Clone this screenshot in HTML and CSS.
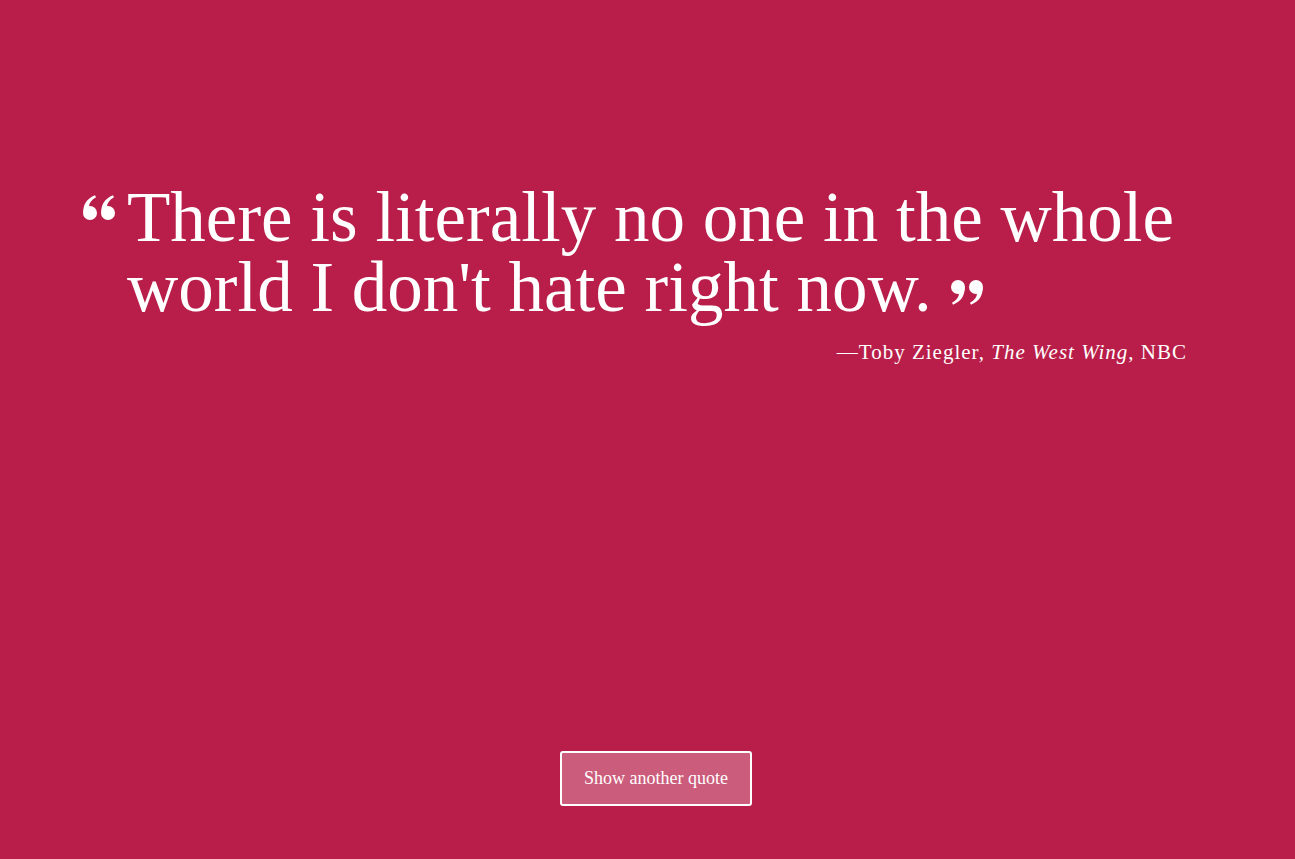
FILE: index.html
```html
<!DOCTYPE html>
<html lang="en">
<head>
<meta charset="utf-8">
<title>Quote</title>
<link rel="stylesheet" href="styles.css">
</head>
<body>
<div class="page">
  <main class="stage">
    <figure class="quote">
      <blockquote class="quote-text"><span class="mark mark-open"><svg class="mark-svg" width="32" height="25" viewBox="0 0 32 25" aria-hidden="true"><g fill="#ffffff"><path d="M0.3 17.5 C0 9.5 4 3.5 12 0.3 L13 2.2 C8.5 4.8 6 8.2 6 11.5 Z"/><circle cx="7" cy="18" r="7"/><path d="M18.3 17.5 C18 9.5 22 3.5 30 0.3 L31 2.2 C26.5 4.8 24 8.2 24 11.5 Z"/><circle cx="25" cy="18" r="7"/></g></svg></span>There is literally no one in the whole world I don't hate right now.<span class="mark mark-close"><svg class="mark-svg" width="32" height="25" viewBox="0 0 32 25" aria-hidden="true"><g fill="#ffffff" transform="rotate(180 16 12.5)"><path d="M0.3 17.5 C0 9.5 4 3.5 12 0.3 L13 2.2 C8.5 4.8 6 8.2 6 11.5 Z"/><circle cx="7" cy="18" r="7"/><path d="M18.3 17.5 C18 9.5 22 3.5 30 0.3 L31 2.2 C26.5 4.8 24 8.2 24 11.5 Z"/><circle cx="25" cy="18" r="7"/></g></svg></span></blockquote>
      <figcaption class="cite">&mdash;Toby Ziegler, <em>The West Wing</em>, NBC</figcaption>
    </figure>
  </main>
  <footer class="actions">
    <button class="btn" type="button">Show another quote</button>
  </footer>
</div>
</body>
</html>
```
FILE: styles.css
```css
html, body {
  margin: 0;
  padding: 0;
  height: 100%;
}
body {
  background: #b81e49;
  color: #ffffff;
  font-family: "Liberation Serif", "Times New Roman", serif;
}
.page {
  min-height: 100vh;
  display: flex;
  flex-direction: column;
  box-sizing: border-box;
}
.stage {
  flex: 1;
  display: flex;
  padding: 182px 108px 0 83px;
}
.quote {
  margin: 0;
  flex: 1;
  display: flex;
  flex-direction: column;
}
.quote-text {
  margin: 0;
  font-size: 71px;
  line-height: 70px;
  padding-left: 44px;
  text-indent: -44px;
}
.mark {
  display: inline-block;
  line-height: 0;
  text-indent: 0;
}
.mark-svg {
  display: block;
}
.mark-open {
  width: 44px;
  vertical-align: 21px;
}
.mark-close {
  margin-left: 19px;
  vertical-align: 6px;
}
.cite {
  align-self: flex-end;
  font-size: 21px;
  letter-spacing: 1px;
  margin-top: 18px;
}
.actions {
  display: flex;
  justify-content: center;
  padding: 0 0 53px 17px;
}
.btn {
  font-family: "Liberation Serif", "Times New Roman", serif;
  font-size: 18px;
  color: #ffffff;
  background: rgba(255, 255, 255, 0.28);
  border: 2px solid #ffffff;
  border-radius: 3px;
  width: 192px;
  height: 55px;
  padding: 0;
  cursor: pointer;
}
```
